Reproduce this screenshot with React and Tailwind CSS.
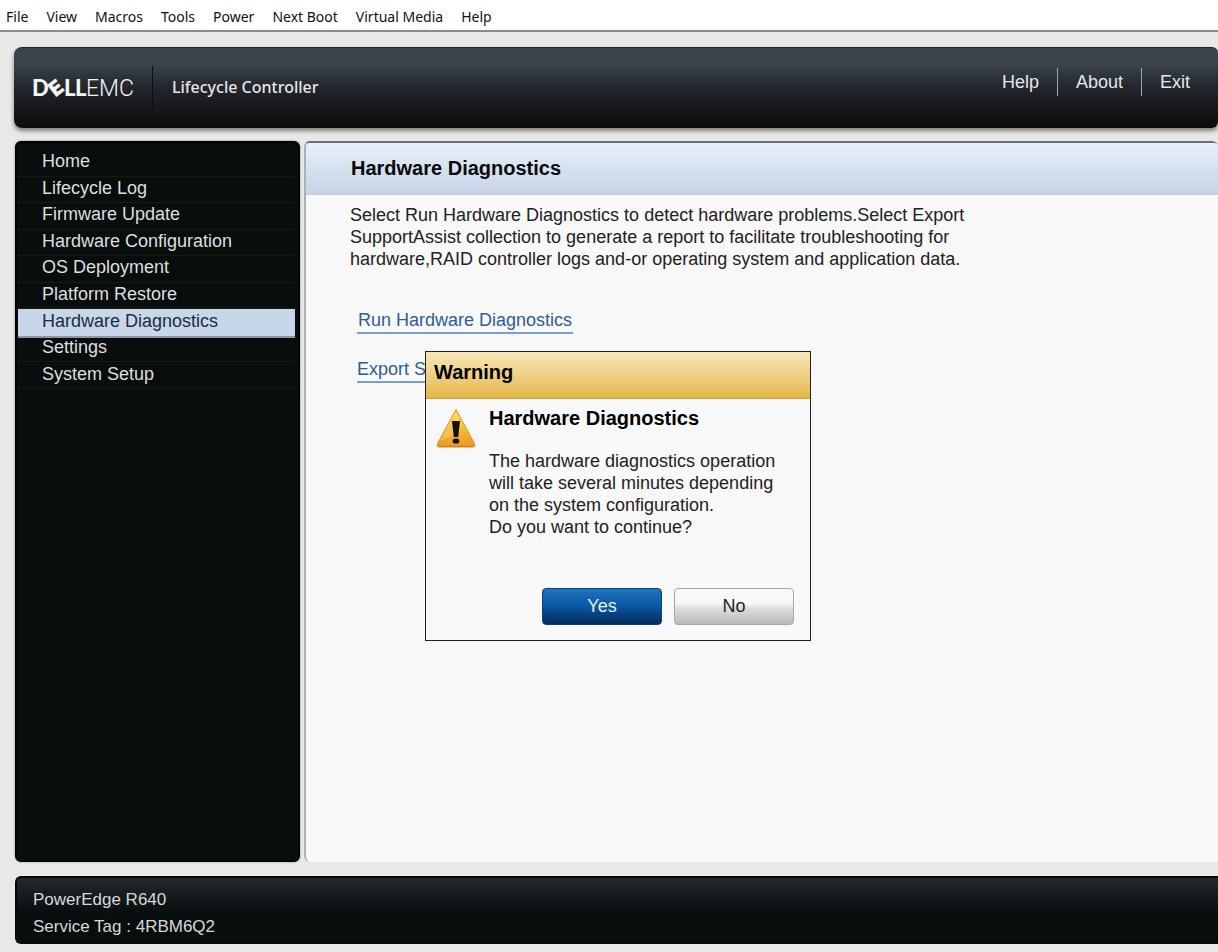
import { useState } from "react";

const menus = [
  "File",
  "View",
  "Macros",
  "Tools",
  "Power",
  "Next Boot",
  "Virtual Media",
  "Help",
];

const navItems = [
  "Home",
  "Lifecycle Log",
  "Firmware Update",
  "Hardware Configuration",
  "OS Deployment",
  "Platform Restore",
  "Hardware Diagnostics",
  "Settings",
  "System Setup",
];

function MenuBar() {
  return (
    <nav className="flex h-8 items-center gap-[18px] border-b-2 border-[#8a8a8a] bg-white px-[6px] pt-[3px] font-['Noto_Sans','Open_Sans',sans-serif] text-[14px] text-[#111]">
      {menus.map((name) => (
        <button key={name} type="button" className="whitespace-nowrap">
          {name}
        </button>
      ))}
    </nav>
  );
}

function Logo() {
  return (
    <svg
      width="106"
      height="32"
      viewBox="-2 -6 106 32"
      fill="#f4f4f4"
      role="img"
      aria-label="Dell EMC"
    >
      <g fontFamily="Lato, sans-serif" fontSize="22" fontWeight="900">
        <text x="-1" y="18">D</text>
        <text x="31" y="18">L</text>
        <text x="42" y="18">L</text>
      </g>
      <text
        x="23"
        y="17"
        fontFamily="Inter, sans-serif"
        fontSize="20"
        fontWeight="800"
        textAnchor="middle"
        stroke="#f4f4f4"
        strokeWidth="0.5"
        transform="rotate(-38 23 10)"
      >
        E
      </text>
      <text x="53" y="18" fontFamily="Roboto, sans-serif" fontSize="23" fontWeight="300">
        EMC
      </text>
    </svg>
  );
}

function Header() {
  return (
    <header className="flex h-[81px] items-center rounded-l-lg rounded-r-md border-t border-[#20262a] bg-linear-to-b from-[#3b444c] from-20% via-[#22252b] via-50% to-[#0d0b0b] pl-[17px] pr-[28px] shadow-[0_3px_4px_rgba(0,0,0,0.45)]">
      <Logo />
      <div className="ml-[15px] h-11 w-px bg-[#0c0e12]" />
      <span className="ml-[19px] pb-[2px] font-['Noto_Sans','Open_Sans',sans-serif] text-[16px] font-medium text-[#e6e6e6]">
        Lifecycle Controller
      </span>
      <nav className="mb-3 ml-auto flex items-center gap-[18px] text-[18px] text-[#e4e6ea]">
        <a href="#help">Help</a>
        <span className="h-7 w-px bg-[#a5a5a5]" />
        <a href="#about">About</a>
        <span className="h-7 w-px bg-[#a5a5a5]" />
        <a href="#exit">Exit</a>
      </nav>
    </header>
  );
}

function Sidebar({ active, onSelect }) {
  return (
    <aside className="w-[285px] shrink-0 rounded-md border-2 border-[#020404] bg-[#080e0e] pt-[7px] shadow-[0_0_2px_rgba(0,0,0,0.5)]">
      <ul className="grid h-[239px] auto-rows-fr pr-[3px] text-[18px]">
        {navItems.map((item) => (
          <li key={item} className="flex">
            <button
              type="button"
              onClick={() => onSelect(item)}
              className={
                item === active
                  ? "z-10 -mb-[2px] ml-px flex-1 border-b-2 border-[#8d97a3] bg-[#c8d6ea] pb-[3px] pl-[24px] text-left leading-[23px] text-[#1c2c3c]"
                  : "mr-[2px] flex-1 border-b border-[#171d08] pb-[2px] pl-[25px] text-left leading-[23px] text-[#dedede]"
              }
            >
              {item}
            </button>
          </li>
        ))}
      </ul>
    </aside>
  );
}

function WarningIcon() {
  return (
    <svg width="40" height="40" viewBox="0 0 40 40" aria-hidden="true">
      <defs>
        <linearGradient id="warn" x1="0" y1="0" x2="0" y2="1">
          <stop offset="0" stopColor="#f8d84a" />
          <stop offset="0.55" stopColor="#f3b932" />
          <stop offset="1" stopColor="#e9971f" />
        </linearGradient>
      </defs>
      <path
        d="M20 1.5 38.5 35.5Q40 39 36.5 39H3.5Q0 39 1.5 35.5Z"
        fill="url(#warn)"
        stroke="#d59a2c"
        strokeLinejoin="round"
      />
      <path d="M3 38.6H37" stroke="#c77d2c" />
      <path d="M19 4.5 3.5 33Q20 28 27 18Z" fill="#fff" opacity="0.18" />
      <path d="M16 13H24L22.2 29H17.8Z" fill="#14110a" />
      <ellipse cx="20" cy="33" rx="3.4" ry="2.6" fill="#14110a" />
    </svg>
  );
}

function WarningDialog({ onClose }) {
  return (
    <div
      role="dialog"
      aria-labelledby="dialog-title"
      className="absolute left-[119px] top-[208px] w-[386px] border border-[#222] bg-[#f8f8f8] text-black"
    >
      <h2
        id="dialog-title"
        className="h-[47px] border-b border-[#c9a444] bg-linear-to-b from-[#f7e8b8] to-[#e4b743] pl-[8px] text-[20px] font-bold leading-[40px]"
      >
        Warning
      </h2>
      <div className="flex gap-[13px] pl-[10px] pt-[8px]">
        <div className="pt-px">
          <WarningIcon />
        </div>
        <div>
          <h3 className="text-[20px] font-bold leading-[22px]">
            Hardware Diagnostics
          </h3>
          <p className="mt-[21px] whitespace-nowrap text-[18px] leading-[22px] text-[#222]">
            The hardware diagnostics operation
            <br />
            will take several minutes depending
            <br />
            on the system configuration.
            <br />
            Do you want to continue?
          </p>
        </div>
      </div>
      <div className="mt-[50px] flex justify-end gap-[12px] pb-[15px] pr-[16px] text-[18px]">
        <button
          type="button"
          onClick={onClose}
          className="h-[37px] w-[120px] rounded-[4px] border border-[#0a3f78] bg-linear-to-b from-[#2173c0] via-[#0757a3] via-50% to-[#042c58] text-[#e8f0f8]"
        >
          Yes
        </button>
        <button
          type="button"
          onClick={onClose}
          className="h-[37px] w-[120px] rounded-[4px] border border-[#a9a9a9] bg-linear-to-b from-[#f8f8f8] from-40% via-[#dcdfdf] via-55% to-[#bababa] text-[#222]"
        >
          No
        </button>
      </div>
    </div>
  );
}

export default function App() {
  const [active, setActive] = useState("Hardware Diagnostics");
  const [dialogOpen, setDialogOpen] = useState(true);

  return (
    <div className="flex min-h-screen flex-col overflow-hidden bg-[#e8e8e8] font-['Liberation_Sans',Arial,sans-serif]">
      <MenuBar />
      <div className="flex flex-1 flex-col pb-2 pl-[14px] pt-[15px]">
        <Header />

        <div className="mt-[13px] flex flex-1 gap-[4px] pl-px">
          <Sidebar active={active} onSelect={setActive} />

          <main className="relative flex-1 rounded-l-md rounded-tr-md border-l-2 border-t-2 border-l-[#a9b0b8] border-t-[#65717a] bg-[#f8f8f8]">
            <h1 className="h-[52px] rounded-t-[4px] border-b border-[#c0cbdb] bg-linear-to-b from-[#e6f1fa] to-[#c6d3e6] pl-[45px] text-[20px] font-bold leading-[50px] text-[#0a0a0a]">
              Hardware Diagnostics
            </h1>
            <p className="ml-[44px] mt-[9px] max-w-[640px] text-[18px] leading-[22px] text-[#222]">
              Select Run Hardware Diagnostics to detect hardware problems.Select
              Export
              <br />
              SupportAssist collection to generate a report to facilitate
              troubleshooting for
              <br />
              hardware,RAID controller logs and-or operating system and
              application data.
            </p>
            <div className="ml-[51px] mt-[39px] flex flex-col items-start gap-[24px] text-[18px] leading-[23px] text-[#2f5d93]">
              <a
                href="#run"
                onClick={() => setDialogOpen(true)}
                className="border-b-2 border-[#7f9fc4] px-px"
              >
                Run Hardware Diagnostics
              </a>
              <a href="#export" className="border-b-2 border-[#7f9fc4]">
                Export SupportAssist Collection
              </a>
            </div>
            {dialogOpen ? (
              <WarningDialog onClose={() => setDialogOpen(false)} />
            ) : null}
          </main>
        </div>

        <footer className="ml-px mt-[14px] h-[68px] rounded-l-md border-2 border-r-0 border-[#050808] bg-linear-to-b from-[#24292d] to-[#080e0e] to-55% pl-[16px] pt-[8px] text-[17px] leading-[27px] text-[#d8d8d8]">
          <p>PowerEdge R640</p>
          <p>Service Tag : 4RBM6Q2</p>
        </footer>
      </div>
    </div>
  );
}
